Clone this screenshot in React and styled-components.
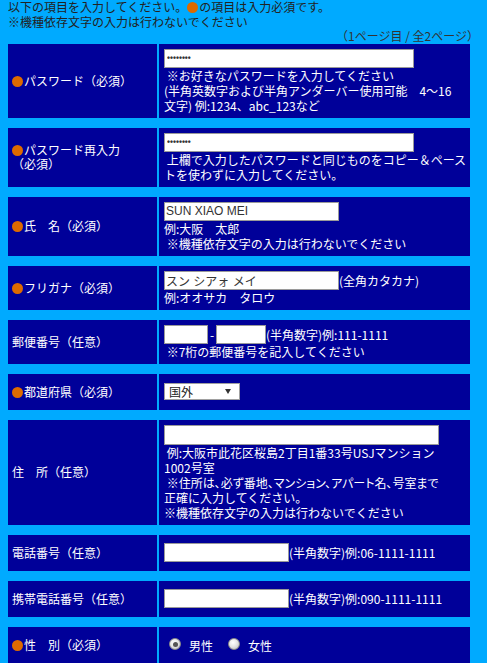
import React from "react";
import styled, { createGlobalStyle } from "styled-components";

const Global = createGlobalStyle`
  html, body { background: #00aaff; }
  body {
    margin: 0 8px;
    font-family: "Noto Sans CJK JP", "Liberation Sans", sans-serif;
    font-size: 12px;
  }
`;

const Page = styled.div`
  padding-bottom: 20px;
`;

const Intro = styled.div`
  color: #222;
  font-size: 12px;
  line-height: 14.5px;
`;

const PageInfo = styled.div`
  color: #333;
  font-size: 12px;
  line-height: 14.5px;
  text-align: right;
`;

const Form = styled.div`
  display: flex;
  flex-direction: column;
  gap: 10px;
  width: 462px;
`;

const Row = styled.div`
  display: grid;
  grid-template-columns: 149px 311px;
  column-gap: 2px;
  min-height: 36px;
`;

const LabelCell = styled.div`
  background: #000099;
  color: #fff;
  display: flex;
  align-items: center;
  padding: 4px 4px;
  line-height: 14px;
  white-space: nowrap;
`;

const ValueCell = styled.div`
  background: #000099;
  color: #fff;
  display: flex;
  flex-direction: column;
  justify-content: center;
  padding: 5px 5px;
  line-height: 15px;
  white-space: nowrap;
  overflow: hidden;
`;

const Dot = styled.span`
  display: inline-block;
  width: 11px;
  height: 11px;
  border-radius: 50%;
  background: #dd6a00;
  vertical-align: -1px;
  margin-right: 1px;
`;

const InputLine = styled.div`
  display: flex;
  align-items: center;
  height: ${(p) => p.$h || 19}px;
`;

const TextInput = styled.input`
  box-sizing: border-box;
  width: ${(p) => p.$w}px;
  height: ${(p) => p.$h || 19}px;
  margin: 0;
  padding: 0 1px;
  border: 1px solid #9a9a9a;
  background: #fff;
  color: #333;
  font-family: "Liberation Sans", "Noto Sans CJK JP", sans-serif;
  font-size: 12px;
  outline: none;
  flex: none;
`;

const PasswordInput = styled(TextInput)`
  font-size: 8.5px;
  font-weight: bold;
  color: #333;
  padding: 0 2px;
`;

const Hyphen = styled.span`
  display: inline-block;
  width: 8px;
  text-align: center;
`;

const Note = styled.div`
  line-height: 15px;
  font-feature-settings: ${(p) => (p.$palt ? '"palt"' : "normal")};
`;

const SelectWrap = styled.div`
  position: relative;
  width: 76px;
  height: 17px;
`;

const Select = styled.select`
  appearance: none;
  box-sizing: border-box;
  width: 76px;
  height: 17px;
  margin: 0;
  padding: 0 0 0 4px;
  border: 1px solid #a0a0a0;
  border-radius: 0;
  background: #fff;
  color: #222;
  font-family: "Noto Sans CJK JP", sans-serif;
  font-size: 12px;
  line-height: 15px;
  outline: none;
`;

const Arrow = styled.span`
  position: absolute;
  right: 9px;
  top: 6px;
  width: 0;
  height: 0;
  border-left: 3px solid transparent;
  border-right: 3px solid transparent;
  border-top: 5px solid #333;
  pointer-events: none;
`;

const RadioGroup = styled.div`
  display: flex;
  align-items: center;
  height: 19px;
  padding-left: 5px;
`;

const RadioOption = styled.label`
  display: flex;
  align-items: center;
  gap: 8px;
  margin-right: 15px;
  color: #fff;
  padding-top: 2px;
`;

const RadioCircle = styled.span`
  position: relative;
  box-sizing: border-box;
  width: 12px;
  height: 12px;
  border-radius: 50%;
  border: 1px solid #8a8a8a;
  background: radial-gradient(circle at 40% 35%, #ffffff 0%, #e6e6e6 45%, #b8b8b8 100%);
  margin-top: -3px;
  &::after {
    content: "";
    display: ${(p) => (p.$checked ? "block" : "none")};
    position: absolute;
    left: 2.5px;
    top: 2.5px;
    width: 5px;
    height: 5px;
    border-radius: 50%;
    background: #555;
  }
`;

function Label({ required, children }) {
  return (
    <LabelCell>
      <span>
        {required && <Dot />}
        {children}
      </span>
    </LabelCell>
  );
}

export default function App() {
  return (
    <Page>
      <Global />
      <Intro>
        以下の項目を入力してください。<Dot />の項目は入力必須です。
        <br />
        ※機種依存文字の入力は行わないでください
      </Intro>
      <PageInfo>（1ページ目 / 全2ページ）</PageInfo>
      <Form>
        <Row>
          <Label required>パスワード（必須）</Label>
          <ValueCell>
            <InputLine>
              <PasswordInput type="password" $w={250} defaultValue="12345678" />
            </InputLine>
            <Note>&nbsp;※お好きなパスワードを入力してください</Note>
            <Note>(半角英数字および半角アンダーバー使用可能　4〜16</Note>
            <Note>文字) 例:1234、abc_123など</Note>
          </ValueCell>
        </Row>
        <Row>
          <Label required>
            パスワード再入力
            <br />
            （必須）
          </Label>
          <ValueCell>
            <InputLine>
              <PasswordInput type="password" $w={250} defaultValue="12345678" />
            </InputLine>
            <Note>&nbsp;上欄で入力したパスワードと同じものをコピー＆ペース</Note>
            <Note>トを使わずに入力してください。</Note>
          </ValueCell>
        </Row>
        <Row>
          <Label required>氏　名（必須）</Label>
          <ValueCell>
            <InputLine>
              <TextInput type="text" $w={175} defaultValue="SUN XIAO MEI" />
            </InputLine>
            <Note>例:大阪　太郎</Note>
            <Note>&nbsp;※機種依存文字の入力は行わないでください</Note>
          </ValueCell>
        </Row>
        <Row>
          <Label required>フリガナ（必須）</Label>
          <ValueCell>
            <InputLine>
              <TextInput type="text" $w={175} defaultValue="スン シアォ メイ" />
              <span>(全角カタカナ)</span>
            </InputLine>
            <Note>例:オオサカ　タロウ</Note>
          </ValueCell>
        </Row>
        <Row>
          <Label>郵便番号（任意）</Label>
          <ValueCell>
            <InputLine>
              <TextInput type="text" $w={44} />
              <Hyphen>-</Hyphen>
              <TextInput type="text" $w={50} />
              <span>(半角数字)例:111-1111</span>
            </InputLine>
            <Note>&nbsp;※7桁の郵便番号を記入してください</Note>
          </ValueCell>
        </Row>
        <Row>
          <Label required>都道府県（必須）</Label>
          <ValueCell>
            <SelectWrap>
              <Select defaultValue="国外">
                <option value="国外">国外</option>
                <option value="大阪府">大阪府</option>
              </Select>
              <Arrow />
            </SelectWrap>
          </ValueCell>
        </Row>
        <Row>
          <Label>住　所（任意）</Label>
          <ValueCell>
            <InputLine $h={20}>
              <TextInput type="text" $w={275} $h={20} />
            </InputLine>
            <Note>&nbsp;例:大阪市此花区桜島2丁目1番33号USJマンション</Note>
            <Note>1002号室</Note>
            <Note $palt>&nbsp;※住所は、必ず番地、マンション、アパート名、号室まで</Note>
            <Note>正確に入力してください。</Note>
            <Note>※機種依存文字の入力は行わないでください</Note>
          </ValueCell>
        </Row>
        <Row>
          <Label>電話番号（任意）</Label>
          <ValueCell>
            <InputLine>
              <TextInput type="text" $w={125} />
              <span>(半角数字)例:06-1111-1111</span>
            </InputLine>
          </ValueCell>
        </Row>
        <Row>
          <Label>携帯電話番号（任意）</Label>
          <ValueCell>
            <InputLine>
              <TextInput type="text" $w={125} />
              <span>(半角数字)例:090-1111-1111</span>
            </InputLine>
          </ValueCell>
        </Row>
        <Row>
          <Label required>性　別（必須）</Label>
          <ValueCell>
            <RadioGroup>
              <RadioOption>
                <RadioCircle $checked />
                男性
              </RadioOption>
              <RadioOption>
                <RadioCircle />
                女性
              </RadioOption>
            </RadioGroup>
          </ValueCell>
        </Row>
      </Form>
    </Page>
  );
}
